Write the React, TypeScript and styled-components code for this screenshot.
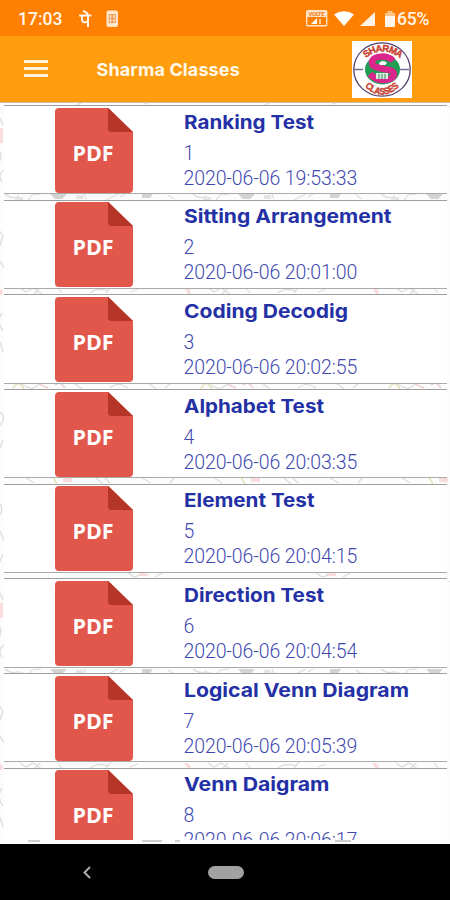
import React from "react";
import styled, { createGlobalStyle } from "styled-components";

const tests = [
  { title: "Ranking Test", date: "2020-06-06 19:53:33", width: 130 },
  { title: "Sitting Arrangement", date: "2020-06-06 20:01:00", width: 207.5 },
  { title: "Coding Decodig", date: "2020-06-06 20:02:55", width: 164 },
  { title: "Alphabet Test", date: "2020-06-06 20:03:35", width: 140 },
  { title: "Element Test", date: "2020-06-06 20:04:15", width: 130.5 },
  { title: "Direction Test", date: "2020-06-06 20:04:54", width: 140 },
  { title: "Logical Venn Diagram", date: "2020-06-06 20:05:39", width: 225 },
  { title: "Venn Daigram", date: "2020-06-06 20:06:17", width: 145.5 },
];

const Doodles = () => (
  <DoodleSheet width="450" height="741" aria-hidden="true">
    <defs>
      <pattern id="doodle" width="188" height="475" patternUnits="userSpaceOnUse">
        <g fill="none" stroke="#dcdcda" strokeWidth="1.2">
          <path d="M5 91q7 6 14 2M28 97l4-5 9-1M84 91l2 5M106 97l12-6M120 94l5-3M168 92l6 4" />
          <path d="M20 185l6 4 7-4 9 6M34 191l6-6M90 190q8-6 18-2M106 190l5-6M130 189l8-3M58 185l4 5" />
          <path d="M20 281l12 5 9-6M74 280l8 6M110 285q8-7 18 0M148 280l8 6M165 285l6-5" />
          <path d="M25 374l9 6M95 374l8 7M104 374l6 6M142 375l9 5M170 380l5-6" />
          <path d="M126 468l8 6 10-3M155 474l9-5" />
          <path d="M0 15l3 7M-4 45q7 5 4 13M4 67q-7 5-2 12M-3 124l6 9-4 12M0 158l4 7M2 210q-6 9 1 18M0 239l3 10M0 309q7 5 0 13M3 337l-5 13M-2 398q7 8 1 15M0 428l4 10M3 451l-5 12" />
          <path d="M73 4l8-4M144 1l10-3M69 738l9-5" />
        </g>
        <path d="M50 91h17l-5 5h-7zM142 91h11l-3 4h-8z" fill="#d3d3d2" />
        <path d="M15 94h8v3h-8zM76 92h7v4h-7z" fill="#e4e4e3" />
        <path d="M0 25h3v15H0z" fill="#fadedc" />
        <path d="M-4 185q9 0 6 7h-6zM184 185h8v3l-4 3zM63 375h9v4h-9zM135 468q12 0 14 5h-8z" fill="#f9dddd" />
        <path d="M55 282q5-5 10 3M39 281l9 4" fill="none" stroke="#f0d2d2" strokeWidth="1.8" />
        <path d="M13 286q5-11 11 0M53 374l4 7" fill="none" stroke="#e9e5c4" strokeWidth="1.8" />
      </pattern>
    </defs>
    <rect width="450" height="741" fill="#fcfcfc" />
    <rect width="450" height="741" fill="url(#doodle)" />
    <path d="M28 738h12M142 738h20M175 738h5M335 738h16" stroke="#cfcfcd" strokeWidth="2" />
  </DoodleSheet>
);

const PdfIcon = () => (
  <svg width="79" height="86" viewBox="0 0 79 86">
    <path d="M4 0h49.5l24.5 24v57a4 4 0 0 1-4 4H4a4 4 0 0 1-4-4V4a4 4 0 0 1 4-4z" fill="#e2574c" />
    <path d="M53 0l25 24H56.5a3.5 3.5 0 0 1-3.5-3.5z" fill="#b53629" />
    <text x="17.5" y="53" textLength="41" fontFamily="Open Sans, sans-serif" fontSize="21.5" fontWeight="700" fill="#fff">
      PDF
    </text>
  </svg>
);

const SchoolLogo = () => (
  <svg width="60" height="57" viewBox="0 0 60 57">
    <defs>
      <path id="topArc" d="M13 18Q30 3 49 18" />
      <path id="bottomArc" d="M12 45Q30 63 49 44" />
    </defs>
    <rect width="60" height="57" fill="#fff" />
    <ellipse cx="30" cy="28.5" rx="28.2" ry="26.7" fill="#fff" stroke="#55406b" strokeWidth="1.3" />
    <path d="M2 28.5h9M48 28.5h9" stroke="#777294" strokeWidth="1.6" />
    <ellipse cx="30.5" cy="28.5" rx="17.5" ry="15" fill="#209e55" />
    <path
      d="M41 20C36 14 21 14 20 21c-1 9 22 5 22 12-1 8-17 8-24 0"
      fill="none"
      stroke="#dc268c"
      strokeWidth="6.5"
    />
    <path d="M27 22q4-4 8 0l-2 2h-5z" fill="#fff" />
    <path d="M24 32h12v6H24z" fill="#d9efe3" />
    <path d="M27 33v5M30 33v5M33 33v5" stroke="#34835c" />
    <g fontFamily="Liberation Sans, sans-serif" fontSize="9.5" fontWeight="700" fill="#c8402f" stroke="#c8402f" strokeWidth=".4">
      <text><textPath href="#topArc" startOffset="1" textLength="38">SHARMA</textPath></text>
      <text><textPath href="#bottomArc" startOffset="1" textLength="39" lengthAdjust="spacingAndGlyphs">CLASSES</textPath></text>
    </g>
  </svg>
);

const App = () => {
  return (
    <Screen>
      <GlobalStyle />
      <StatusBar>
        <Clock>17:03</Clock>
        <svg width="13" height="18" viewBox="0 0 13 18" fill="none" stroke="#fff4e8" strokeWidth="2">
          <path d="M0 5.5h12.5M3 5.5v4q0 4 6 2M9 5.5V17M9 5Q8 2 4 1" />
        </svg>
        <SimIcon width="13" height="18" viewBox="0 0 13 18">
          <rect x=".5" y=".5" width="11.5" height="16.5" rx="2" fill="#ffe6cc" />
          <rect x="2.8" y="4" width="7" height="9" fill="#ed9e56" />
          <path d="M4.6 5v7M8 5v7" stroke="#fff0df" strokeWidth="1.3" strokeDasharray="3 1" />
        </SimIcon>
        <Signals>
          <svg width="22" height="17" viewBox="0 0 22 17">
            <rect x=".7" y=".7" width="20" height="15" rx="1" fill="none" stroke="#ffe3c5" strokeWidth="1.4" />
            <path d="M1 1h20v6H1z" fill="#ffe3c5" />
            <text x="2.5" y="6.2" fontSize="6" fontWeight="700" textLength="16" fontFamily="Roboto, sans-serif" fill="#ed811f">VOLTE</text>
            <path d="M5 14l6-6v6z" fill="#fff" />
            <path d="M14 9v5" stroke="#ffe3c5" strokeWidth="1.5" />
          </svg>
          <svg width="20" height="15" viewBox="0 0 20 15"><path d="M0 3.5Q10-3 20 3.5L10 15z" fill="#fff" /></svg>
          <svg width="15" height="14" viewBox="0 0 15 14"><path d="M0 14L15 0v14z" fill="#fff3e6" /></svg>
          <svg width="10" height="16" viewBox="0 0 10 16">
            <path d="M2.5 0h5v2H10v4H0V2h2.5z" fill="#ffc48a" />
            <path d="M0 5h10v11H0z" fill="#fff5eb" />
          </svg>
        </Signals>
        <Battery>65%</Battery>
      </StatusBar>
      <AppBar>
        <MenuButton aria-label="Menu">
          <MenuLine />
          <MenuLine />
          <MenuLine />
        </MenuButton>
        <AppTitle>Sharma Classes</AppTitle>
        <SchoolLogo />
      </AppBar>
      <Content>
        <Doodles />
        <List>
          {tests.map((test, index) => (
            <Card key={test.title}>
              <PdfIcon />
              <Details>
                <Title width={test.width} height="24">
                  <text x="0" y="18.5" textLength={test.width} lengthAdjust="spacingAndGlyphs">{test.title}</text>
                </Title>
                <Info $top={8}>{index + 1}</Info>
                <Info $top={1}>{test.date}</Info>
              </Details>
            </Card>
          ))}
        </List>
      </Content>
      <NavBar>
        <svg width="9" height="13" viewBox="0 0 9 13" fill="none" stroke="#aaa" strokeWidth="2">
          <path d="M8 1L2.5 6.5 8 12" />
        </svg>
        <HomePill />
      </NavBar>
    </Screen>
  );
};

const GlobalStyle = createGlobalStyle`
  * {
    box-sizing: border-box;
  }

  body {
    margin: 0;
  }
`;

const Screen = styled.div`
  display: flex;
  flex-direction: column;
  width: 450px;
  height: 900px;
  overflow: hidden;
  background: #000;
  font-family: Roboto, sans-serif;
`;

const StatusBar = styled.div`
  display: flex;
  align-items: center;
  height: 36px;
  padding: 1px 19px 0 18px;
  background: #ff7f00;
  color: #fff4e8;
`;

const Clock = styled.span`
  width: 60.5px;
  font-size: 17.5px;
  font-weight: 500;
`;

const SimIcon = styled.svg`
  margin-left: 14px;
`;

const Signals = styled.div`
  display: flex;
  align-items: center;
  gap: 6px;
  margin-left: auto;

  svg:last-child {
    margin-left: 4px;
  }
`;

const Battery = styled.span`
  width: 34px;
  margin-left: 2px;
  font-size: 17.5px;
  font-weight: 500;
  letter-spacing: -0.2px;
`;

const AppBar = styled.header`
  display: flex;
  align-items: center;
  height: 66px;
  padding: 0 38.5px 0 23.5px;
  background: #ff9d0e;
`;

const MenuButton = styled.button`
  display: flex;
  flex-direction: column;
  gap: 4px;
  margin-top: -1px;
  padding: 0;
  border: 0;
  background: none;
`;

const MenuLine = styled.span`
  width: 24px;
  height: 3px;
  background: #fff1db;
`;

const AppTitle = styled.h1`
  flex: 1;
  margin: 1px 0 0 49px;
  color: #fff8e9;
  font-family: Inter, sans-serif;
  font-size: 18px;
  font-weight: 700;
  letter-spacing: 0.12px;
`;

const Content = styled.main`
  position: relative;
  height: 742px;
  padding: 2px 3px 4px 4px;
  border-top: 1px solid #c9c0ac;
  border-bottom: 1px solid #b5b5b5;
`;

const DoodleSheet = styled.svg`
  position: absolute;
  top: 0;
  left: 0;
`;

const List = styled.div`
  position: relative;
  height: 735px;
  overflow: hidden;
`;

const Card = styled.article`
  display: flex;
  height: 89.2px;
  margin-bottom: 5.5px;
  padding: 1.5px 0 0 50.5px;
  border-top: 1.5px solid #9f9f9f;
  border-bottom: 1.5px solid #aaa;
  background: #fff;
`;

const Details = styled.div`
  display: flex;
  flex-direction: column;
  margin-left: 50px;
  padding-top: 2px;
`;

const Title = styled.svg`
  overflow: visible;
  font-family: Inter, sans-serif;
  font-size: 19px;
  font-weight: 700;
  fill: #2430a5;
`;

const Info = styled.span<{ $top: number }>`
  margin-top: ${(props) => props.$top}px;
  color: #3f4ab0;
  font-size: 19.5px;
  font-weight: 300;
  line-height: 24px;
  letter-spacing: -0.1px;
`;

const NavBar = styled.nav`
  display: flex;
  align-items: center;
  height: 56px;
  padding-left: 82px;
`;

const HomePill = styled.span`
  width: 36px;
  height: 13px;
  margin-left: 117px;
  border-radius: 7px;
  background: #a1a1a1;
`;

export default App;
